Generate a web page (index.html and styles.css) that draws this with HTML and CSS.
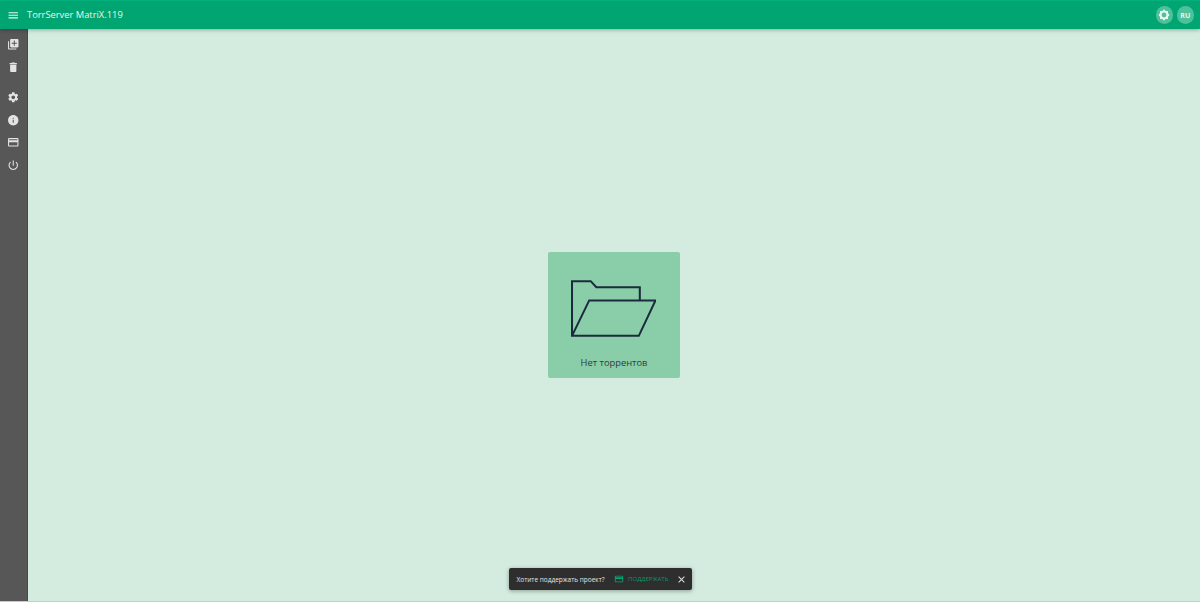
FILE: index.html
```html
<!DOCTYPE html>
<html lang="ru">
<head>
<meta charset="utf-8">
<title>TorrServer MatriX.119</title>
<link rel="stylesheet" href="styles.css">
</head>
<body>
<div class="app">
  <header class="appbar">
    <svg class="menu-icon" viewBox="0 0 24 24"><path d="M3 18h18v-2H3v2zm0-5h18v-2H3v2zm0-7v2h18V6H3z"/></svg>
    <div class="title">TorrServer MatriX.119</div>
    <div class="actions">
      <div class="round-btn"><svg class="gear" viewBox="0 0 24 24"><path fill-rule="evenodd" d="M20 8.690V4h-4.690L12 .69 8.690 4H4v4.690L.69 12 4 15.310V20h4.690L12 23.310 15.310 20H20v-4.690L23.310 12 20 8.690zM12 16.800a4.800 4.800 0 1 1 0-9.600 4.800 4.800 0 0 1 0 9.600z"/></svg></div>
      <div class="round-btn lang">RU</div>
    </div>
  </header>
  <div class="body">
    <nav class="sidebar">
      <div class="nav-group">
        <div class="nav-item"><svg viewBox="0 0 24 24"><path d="M4 6H2v14c0 1.100.9 2 2 2h14v-2H4V6zm16-4H8c-1.100 0-2 .9-2 2v12c0 1.100.9 2 2 2h12c1.100 0 2-.9 2-2V4c0-1.100-.9-2-2-2zm-1 9h-4v4h-2v-4H9V9h4V5h2v4h4v2z"/></svg></div>
        <div class="nav-item"><svg viewBox="0 0 24 24"><path d="M6 19c0 1.100.9 2 2 2h8c1.100 0 2-.9 2-2V7H6v12zM19 4h-3.500l-1-1h-5l-1 1H5v2h14V4z"/></svg></div>
      </div>
      <div class="nav-group second">
        <div class="nav-item"><svg viewBox="0 0 24 24"><path d="M19.140 12.940c.04-.3.06-.61.06-.94 0-.32-.02-.64-.07-.94l2.030-1.580c.18-.14.23-.41.12-.61l-1.920-3.320c-.12-.22-.37-.29-.59-.22l-2.390.96c-.5-.38-1.030-.7-1.620-.94l-.36-2.540c-.04-.24-.24-.41-.48-.41h-3.840c-.24 0-.43.17-.47.41l-.36 2.540c-.59.24-1.130.57-1.620.94l-2.390-.96c-.22-.08-.47 0-.59.22L2.740 8.870c-.12.21-.08.47.12.61l2.030 1.580c-.05.3-.09.63-.09.94s.02.64.07.94l-2.030 1.580c-.18.14-.23.41-.12.61l1.920 3.320c.12.22.37.29.59.22l2.390-.96c.5.38 1.030.7 1.620.94l.36 2.540c.05.24.24.41.48.41h3.840c.24 0 .44-.17.47-.41l.36-2.540c.59-.24 1.130-.56 1.620-.94l2.390.96c.22.08.47 0 .59-.22l1.920-3.320c.12-.22.07-.47-.12-.61l-2.010-1.580zM12 15.600c-1.980 0-3.600-1.620-3.600-3.600s1.620-3.600 3.600-3.600 3.600 1.620 3.600 3.600-1.620 3.600-3.600 3.600z"/></svg></div>
        <div class="nav-item"><svg viewBox="0 0 24 24"><path d="M12 2C6.480 2 2 6.480 2 12s4.480 10 10 10 10-4.480 10-10S17.520 2 12 2zm1 15h-2v-6h2v6zm0-8h-2V7h2v2z"/></svg></div>
        <div class="nav-item"><svg viewBox="0 0 24 24"><path d="M20 4H4c-1.110 0-1.990.89-1.990 2L2 18c0 1.110.89 2 2 2h16c1.110 0 2-.89 2-2V6c0-1.110-.89-2-2-2zm0 14H4v-6h16v6zm0-10H4V6h16v2z"/></svg></div>
        <div class="nav-item"><svg viewBox="0 0 24 24"><path d="M13 3h-2v10h2V3zm4.830 2.170l-1.420 1.420C17.990 7.860 19 9.810 19 12c0 3.870-3.130 7-7 7s-7-3.130-7-7c0-2.190 1.010-4.140 2.580-5.420L6.170 5.170C4.230 6.820 3 9.260 3 12c0 4.970 4.030 9 9 9s9-4.030 9-9c0-2.740-1.230-5.180-3.170-6.830z"/></svg></div>
      </div>
    </nav>
    <main class="content">
      <div class="empty-card">
        <svg class="folder" viewBox="0 0 84 56"><path d="M1 55V1h18.500l5.500 6h43v13.500M1 55l17-35h65.500L67 55H1z"/></svg>
        <div class="empty-text">Нет торрентов</div>
      </div>
    </main>
  </div>
  <div class="snackbar">
    <span class="snack-msg">Хотите поддержать проект?</span>
    <span class="snack-action"><svg viewBox="0 0 24 24"><path d="M20 4H4c-1.110 0-1.990.89-1.990 2L2 18c0 1.110.89 2 2 2h16c1.110 0 2-.89 2-2V6c0-1.110-.89-2-2-2zm0 14H4v-6h16v6zm0-10H4V6h16v2z"/></svg>ПОДДЕРЖАТЬ</span>
    <svg class="snack-close" viewBox="0 0 24 24"><path d="M19 6.410 17.590 5 12 10.590 6.410 5 5 6.410 10.590 12 5 17.590 6.410 19 12 13.410 17.590 19 19 17.590 13.410 12z"/></svg>
  </div>
</div>
</body>
</html>
```

FILE: styles.css
```css
* { box-sizing: border-box; }
html, body { margin: 0; height: 100%; overflow: hidden; }
body { font-family: "Open Sans", "Noto Sans", sans-serif; background: #d4ecdf; }
.app { position: relative; height: 602px; display: flex; flex-direction: column; border-bottom: 1px solid #c4cfc9; }
.appbar {
  position: relative; z-index: 2; flex: 0 0 29px; height: 29px;
  display: flex; align-items: center; padding: 0 6px 0 7px;
  background: #00a572; color: #e8f5ee; border-top: 1px solid #03b07b;
  box-shadow: 0 1px 4px rgba(0,0,0,.3);
}
.menu-icon { width: 12.500px; height: 12.500px; fill: #e8f5ee; flex: none; }
.title { margin-left: 7.500px; font-size: 9.350px; line-height: 14px; white-space: nowrap; }
.actions { margin-left: auto; display: flex; gap: 3.500px; }
.round-btn {
  width: 17.500px; height: 17.500px; border-radius: 50%; background: #4dc09c;
  display: flex; align-items: center; justify-content: center;
  color: #e8f5ee; font-size: 7px; font-weight: 700;
}
.gear { width: 12px; height: 12px; fill: #e8f5ee; }
.body { flex: 1; display: flex; min-height: 0; }
.sidebar { flex: 0 0 28px; background: #575757; border-right: 1px solid #4a4a4a; padding: 4px 1px 0 0; }
.nav-item { height: 22.600px; display: flex; align-items: center; justify-content: center; }
.nav-item svg { width: 12.500px; height: 12.500px; fill: #e4e4e4; }
.nav-group.second { margin-top: 8px; }
.content { flex: 1; display: flex; align-items: center; justify-content: center; }
.empty-card {
  width: 132px; height: 126px; border-radius: 2px; background: #89cda9;
  display: flex; flex-direction: column; align-items: center; padding-top: 28px;
}
.folder { width: 85px; height: 57px; fill: none; stroke: #1c2a3f; stroke-width: 2; flex: none; margin-right: 1px; }
.empty-text { margin-top: 19px; font-size: 9.350px; line-height: 14px; color: #2e3d3a; }
.snackbar {
  position: absolute; left: 509px; top: 568px; width: 183px; height: 22px;
  display: flex; align-items: center; padding: 0 5px 0 7.500px;
  background: #2e2e2e; border-radius: 2px; color: #e4e4e4; font-size: 6.500px;
  box-shadow: 0 1px 4px rgba(0,0,0,.35);
}
.snack-msg { white-space: nowrap; }
.snack-action { margin-left: 9.500px; display: flex; align-items: center; gap: 4px; color: #0d9468; font-size: 6.050px; white-space: nowrap; }
.snack-action svg { width: 10px; height: 10px; fill: #00a572; }
.snack-close { margin-left: auto; width: 11px; height: 11px; fill: #e4e4e4; flex: none; }
```
